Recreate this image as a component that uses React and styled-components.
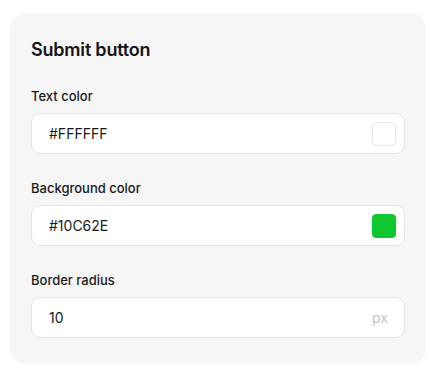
import React from 'react';
import styled, { createGlobalStyle } from "styled-components";

const Global = createGlobalStyle`
    html, body {
        margin: 0;
        padding: 0;
        background: #ffffff;
        font-family: Inter, "Noto Sans", "Liberation Sans", sans-serif;
    }
`;
const Card = styled.div`
    margin: 13px 10px;
    padding: 25px 21px 26px;
    background: #f6f6f6;
    border-radius: 16px;
    display: flex;
    flex-direction: column;
`;
const Title = styled.div`
    font-size: 18px;
    line-height: 24px;
    font-weight: 600;
    color: #141414;
    letter-spacing: -0.2px;
    margin-bottom: 25px;
`;
const Fields = styled.div`
    display: flex;
    flex-direction: column;
    gap: 25px;
`;
const Field = styled.div`
    display: flex;
    flex-direction: column;
    gap: 8px;
`;
const Label = styled.div`
    font-size: 13px;
    line-height: 18px;
    font-weight: 500;
    color: #1a1a1a;
`;
const InputBox = styled.div`
    display: flex;
    align-items: center;
    justify-content: space-between;
    height: 41px;
    box-sizing: border-box;
    padding: 0 8px 0 17px;
    background: #ffffff;
    border: 1px solid #e6e6e6;
    border-radius: 9px;
`;
const Value = styled.span`
    font-size: 14px;
    color: #1a1a1a;
`;
const Swatch = styled.span`
    width: 24px;
    height: 24px;
    box-sizing: border-box;
    border-radius: 4px;
    background: ${p => p.color};
    border: 1px solid ${p => p.color === '#FFFFFF' ? '#e6e6e6' : p.color};
`;
const Unit = styled.span`
    font-size: 14px;
    color: #c2c2c2;
    margin-right: 8px;
`;

const App = () => {
    return (
        <>
            <Global />
            <Card>
                <Title>Submit button</Title>
                <Fields>
                    <Field>
                        <Label>Text color</Label>
                        <InputBox>
                            <Value>#FFFFFF</Value>
                            <Swatch color="#FFFFFF" />
                        </InputBox>
                    </Field>
                    <Field>
                        <Label>Background color</Label>
                        <InputBox>
                            <Value>#10C62E</Value>
                            <Swatch color="#10C62E" />
                        </InputBox>
                    </Field>
                    <Field>
                        <Label>Border radius</Label>
                        <InputBox>
                            <Value>10</Value>
                            <Unit>px</Unit>
                        </InputBox>
                    </Field>
                </Fields>
            </Card>
        </>
    );
};

export default App;
